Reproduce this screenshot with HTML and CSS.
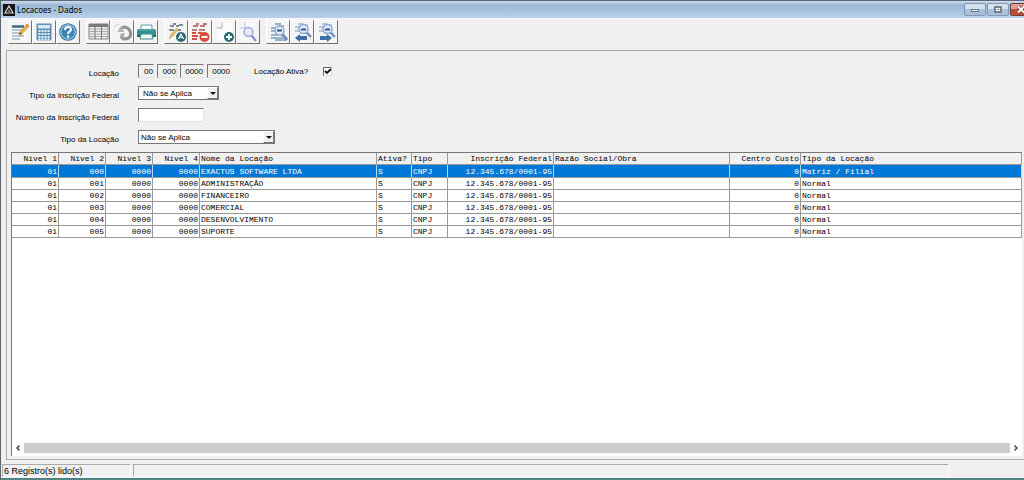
FILE: index.html
```html
<!DOCTYPE html>
<html lang="pt-BR">
<head>
<meta charset="utf-8">
<title>Locacoes - Dados</title>
<link rel="stylesheet" href="styles.css">
</head>
<body>
<div class="window">
  <header class="titlebar">
    <svg class="app-icon" viewBox="0 0 12 12" aria-hidden="true"><rect width="12" height="12" fill="#151515"/><path d="M6 2 10 9H2Z" fill="none" stroke="#d9d9cf" stroke-width="1.2"/><path d="M6 4.500 7.500 8h-3Z" fill="#777"/></svg>
    <h1 class="title">Locacoes - Dados</h1>
    <div class="window-buttons">
      <button class="win-btn" aria-label="Minimizar"><svg viewBox="0 0 20 11"><rect x="6.500" y="5.500" width="7" height="2" fill="#fff" stroke="#66717d"/></svg></button>
      <button class="win-btn" aria-label="Maximizar"><svg viewBox="0 0 20 11"><rect x="7" y="3" width="6" height="5" fill="#fff" stroke="#59636e" stroke-width="1.500"/><rect x="9" y="5" width="2" height="1" fill="#59636e"/></svg></button>
      <button class="win-btn win-close" aria-label="Fechar"><svg viewBox="0 0 20 11"><path d="m7 2.500 6 6m0-6-6 6" stroke="#7b3028" stroke-width="3.500"/><path d="m7 2.500 6 6m0-6-6 6" stroke="#fff" stroke-width="2"/></svg></button>
    </div>
  </header>

  <nav class="toolbar" aria-label="Ferramentas">
    <div class="tool-group">
      <button class="tool" aria-label="Editar"><svg viewBox="0 0 22 22"><path d="M3 4h14v14H3z" fill="#f9f9f5"/><path d="M3 5.500h12" stroke="#3e668a" stroke-width="2.500"/><path d="M3 9h10M3 12h8M3 15h12M3 18h8" stroke="#7890a5"/><path d="m10 14 1-3 7-8 2 2-7 8Z" fill="#edb33d" stroke="#b88b38" stroke-width=".6"/><path d="m10 14 1-3 2 2Z" fill="#705b42"/><path d="m17 4 1-1 2 2-1 1Z" fill="#c87855"/></svg></button>
      <button class="tool" aria-label="Calculadora"><svg viewBox="0 0 22 22"><rect x="3.500" y="2.500" width="15" height="17" rx="1" fill="#5b8fb6"/><rect x="5" y="4" width="12" height="3.500" fill="#d9e8f0"/><path d="M5.500 10h11M5.500 13h11M5.500 16h11M5.500 18.500h11" stroke="#e8f2f8" stroke-width="1.800" stroke-dasharray="2 1"/></svg></button>
      <button class="tool" aria-label="Ajuda"><svg viewBox="0 0 22 22"><circle cx="11" cy="11" r="8.800" fill="#2d70a3"/><circle cx="11" cy="11" r="7.200" fill="#3c85b8" stroke="#c4deec"/><path d="M8 9c0-4 6-4 6-.500 0 2.200-3 2-3 4.500" fill="none" stroke="#fff" stroke-width="2"/><circle cx="11" cy="15.500" r="1.200" fill="#fff"/></svg></button>
    </div>
    <div class="tool-group">
      <button class="tool" aria-label="Grade"><svg viewBox="0 0 22 22"><path d="M2 3h19v15H2z" fill="#eee" stroke="#858585"/><path d="M2 4.500h19" stroke="#777c80" stroke-width="3"/><path d="M2 8h19M2 10.500h19M2 13h19M2 15.500h19" stroke="#aaa"/><path d="M8 3v15M14.500 3v15" stroke="#777"/></svg></button>
      <button class="tool" aria-label="Atualizar"><svg viewBox="0 0 22 22"><path d="m9 9 2-2c3-2 7 0 8 3 2 5-1 8-5 8-2 0-3-1-4-3" fill="none" stroke="#949494" stroke-width="3.200"/><path d="m6 11 5-5 2 5Z" fill="#b4b4b4"/><path d="m9 13 5-1-3 6Z" fill="#aaa"/><path d="m3 6 2-1 1-2 2 1" fill="none" stroke="#d2d2d2"/></svg></button>
      <button class="tool" aria-label="Imprimir"><svg viewBox="0 0 22 22"><path d="M6 4h11v5H6z" fill="#f4faf9" stroke="#5ba3a1"/><path d="M3 8h17l1 2v5H2v-5Z" fill="#34908f"/><path d="M4 9h15" stroke="#76b7b3"/><path d="M6 13h11l1 5H5Z" fill="#eaf5f4" stroke="#3b8e8b"/><path d="M2 15h3m13 0h3" stroke="#266c69" stroke-width="2"/></svg></button>
    </div>
    <div class="tool-group">
      <button class="tool" aria-label="Alterar"><svg viewBox="0 0 22 22"><path d="M5 5h4m2 0h3M8 3h3m3 1h4M4 9h5m2 0h5" stroke="#54686b" stroke-width="1.500"/><path d="m4 18 2-5 6-6 1.500 1.500-6 7Z" fill="#e5bd60" stroke="#b6a16c" stroke-width=".5"/><circle cx="16" cy="16" r="5" fill="#286b75"/><path d="m13.500 18 2.500-5 2.500 5m-4-1.500h3" fill="none" stroke="#fff" stroke-width="1.200"/></svg></button>
      <button class="tool" aria-label="Excluir"><svg viewBox="0 0 22 22"><path d="M4 5h5m2 0h5M7 3h3m4 0h4M3 9h5m2 0h6" stroke="#aa514b" stroke-width="1.500"/><path d="M3 12h4m2 0h4M3 15h6M3 18h5" stroke="#d34d42" stroke-width="2"/><circle cx="15.500" cy="16" r="5" fill="#dd4b3f"/><path d="M12.500 16h6" stroke="#fff" stroke-width="2"/></svg></button>
      <button class="tool" aria-label="Incluir"><svg viewBox="0 0 22 22"><path d="M9 2h10v17H4V7Z" fill="#fcfcfe"/><path d="M9 2v5H4" fill="none" stroke="#9babc1"/><circle cx="16" cy="16" r="5" fill="#286b75"/><path d="M13 16h6m-3-3v6" stroke="#fff" stroke-width="1.800"/></svg></button>
      <button class="tool" aria-label="Pesquisar"><svg viewBox="0 0 22 22"><path d="M8 2h10v17H3V7Z" fill="#fafafd"/><path d="M8 2v5H3" fill="none" stroke="#b0b6ce"/><path d="m14 14 5 6" stroke="#8e8fc8" stroke-width="2.500"/><circle cx="11.500" cy="11" r="4.500" fill="#e8eafb" stroke="#a1a6df" stroke-width="1.500"/></svg></button>
    </div>
    <div class="tool-group">
      <button class="tool" aria-label="Localizar"><svg viewBox="0 0 22 22"><path d="M8 3h6M4 7h5m3-2h5M4 10h4m-4 4h7m-7 3h12m-8 2h11" stroke="#7c9cb8" stroke-width="1.300"/><path d="m15 13 5 6" stroke="#7089be" stroke-width="3"/><circle cx="12.500" cy="9.500" r="4.500" fill="#e5edfb" stroke="#8da6d4" stroke-width="1.500"/><path d="M10 9.500h5" stroke="#364e85" stroke-width="2"/></svg></button>
      <button class="tool" aria-label="Localizar anterior"><svg viewBox="0 0 22 22"><path d="M7 3h6M4 6h5m3-2h5M4 10h4" stroke="#7c9cb8"/><path d="m15 11 5 5" stroke="#7798ce" stroke-width="2.500"/><circle cx="12.500" cy="8" r="4.500" fill="#e5edfb" stroke="#8da6d4" stroke-width="1.500"/><path d="M10 8.500h5" stroke="#364e85" stroke-width="2"/><path d="m4 17 5-4v2h7v4H9v2Z" fill="#416fa8"/></svg></button>
      <button class="tool" aria-label="Localizar próximo"><svg viewBox="0 0 22 22"><path d="M7 3h6M4 6h5m3-2h5M4 10h4" stroke="#7c9cb8"/><path d="m15 11 5 5" stroke="#7798ce" stroke-width="2.500"/><circle cx="12.500" cy="8" r="4.500" fill="#e5edfb" stroke="#8da6d4" stroke-width="1.500"/><path d="M10 8.500h5" stroke="#364e85" stroke-width="2"/><path d="m17 17-5-4v2H5v4h7v2Z" fill="#416fa8"/></svg></button>
    </div>
  </nav>

  <main class="panel">
    <form class="form">
      <label class="label" for="nivel1">Locação</label>
      <div class="controls">
        <input class="field code code-2" id="nivel1" value="00">
        <input class="field code code-3" aria-label="Nível 2" value="000">
        <input class="field code code-4" aria-label="Nível 3" value="0000">
        <input class="field code code-4" aria-label="Nível 4" value="0000">
        <label class="active-label" for="ativa">Locação Ativa?</label>
        <span class="check"><input class="check-box" type="checkbox" id="ativa" checked><svg class="check-mark" viewBox="0 0 9 9" aria-hidden="true"><path d="m2 4 2 2 4-4" fill="none" stroke="#111" stroke-width="1.800"/></svg></span>
      </div>
      <label class="label" for="tipo-inscricao">Tipo da Inscrição Federal</label>
      <div class="controls">
        <span class="combo combo-short"><select class="field select select-inset" id="tipo-inscricao"><option>Não se Aplica</option></select><span class="arrow"></span></span>
      </div>
      <label class="label" for="numero">Número da Inscrição Federal</label>
      <div class="controls"><input class="field number" id="numero"></div>
      <label class="label" for="tipo-locacao">Tipo da Locação</label>
      <div class="controls">
        <span class="combo combo-long"><select class="field select" id="tipo-locacao"><option>Não se Aplica</option></select><span class="arrow"></span></span>
      </div>
    </form>

    <section class="grid-box">
      <div class="grid-view">
        <table class="grid">
          <colgroup><col class="w-level"><col class="w-level"><col class="w-level"><col class="w-level"><col class="w-name"><col class="w-active"><col class="w-type"><col class="w-tax"><col class="w-company"><col class="w-cost"><col></colgroup>
          <thead><tr><th class="num">Nível 1</th><th class="num">Nível 2</th><th class="num">Nível 3</th><th class="num">Nível 4</th><th>Nome da Locação</th><th>Ativa?</th><th>Tipo</th><th class="num">Inscrição Federal</th><th>Razão Social/Obra</th><th class="num">Centro Custo</th><th>Tipo da Locação</th></tr></thead>
          <tbody>
            <tr class="selected"><td class="num">01</td><td class="num">000</td><td class="num">0000</td><td class="num">0000</td><td>EXACTUS SOFTWARE LTDA</td><td>S</td><td>CNPJ</td><td class="num">12.345.678/0001-95</td><td></td><td class="num">0</td><td>Matriz / Filial</td></tr>
            <tr><td class="num">01</td><td class="num">001</td><td class="num">0000</td><td class="num">0000</td><td>ADMINISTRAÇÃO</td><td>S</td><td>CNPJ</td><td class="num">12.345.678/0001-95</td><td></td><td class="num">0</td><td>Normal</td></tr>
            <tr><td class="num">01</td><td class="num">002</td><td class="num">0000</td><td class="num">0000</td><td>FINANCEIRO</td><td>S</td><td>CNPJ</td><td class="num">12.345.678/0001-95</td><td></td><td class="num">0</td><td>Normal</td></tr>
            <tr><td class="num">01</td><td class="num">003</td><td class="num">0000</td><td class="num">0000</td><td>COMERCIAL</td><td>S</td><td>CNPJ</td><td class="num">12.345.678/0001-95</td><td></td><td class="num">0</td><td>Normal</td></tr>
            <tr><td class="num">01</td><td class="num">004</td><td class="num">0000</td><td class="num">0000</td><td>DESENVOLVIMENTO</td><td>S</td><td>CNPJ</td><td class="num">12.345.678/0001-95</td><td></td><td class="num">0</td><td>Normal</td></tr>
            <tr><td class="num">01</td><td class="num">005</td><td class="num">0000</td><td class="num">0000</td><td>SUPORTE</td><td>S</td><td>CNPJ</td><td class="num">12.345.678/0001-95</td><td></td><td class="num">0</td><td>Normal</td></tr>
          </tbody>
        </table>
      </div>
      <div class="scrollbar">
        <button class="scroll-btn" aria-label="Rolar à esquerda"><svg viewBox="0 0 6 10"><path d="M4.500 2.500 2 5l2.500 2.500" fill="none" stroke="#444" stroke-width="1.500"/></svg></button>
        <div class="thumb"></div>
        <button class="scroll-btn" aria-label="Rolar à direita"><svg viewBox="0 0 6 10"><path d="M1.500 2.500 4 5 1.500 7.500" fill="none" stroke="#444" stroke-width="1.500"/></svg></button>
      </div>
    </section>
  </main>

  <footer class="status">
    <div class="status-cell status-count">6 Registro(s) lido(s)</div>
    <div class="status-cell status-message"></div>
  </footer>
</div>
</body>
</html>
```
FILE: styles.css
```css
* { box-sizing: border-box; }

body {
  margin: 0;
  font-family: "Liberation Sans", Arial, sans-serif;
  font-size: 8px;
  color: #000;
}

button, input, select { font: inherit; color: inherit; margin: 0; }
button svg { display: block; width: 100%; height: 100%; }

.window {
  display: flex;
  flex-direction: column;
  min-height: 100vh;
  overflow-x: hidden;
  background: #f0f0f0;
  border-left: 1px solid #596774;
  border-bottom: 2px solid #528486;
}

.titlebar {
  display: flex;
  align-items: center;
  height: 18px;
  padding-left: 2px;
  border-top: 1px solid #5c6674;
  background: linear-gradient(#d0dded, #9ab7d5 25%, #b9d0e9);
}
.app-icon { width: 12px; height: 12px; }
.title { flex: 1; margin: 0 0 0 2px; font: 8px/12px "Noto Sans", sans-serif; }
.window-buttons { display: flex; gap: 1px; overflow: hidden; margin-right: -8px; }
.win-btn {
  width: 22px;
  height: 13px;
  padding: 0;
  border: 1px solid #8499b0;
  border-radius: 2px;
  background: linear-gradient(#d4e1ef 50%, #a9c0d9 50%);
}
.win-close { border-color: #713c38; background: linear-gradient(#dda093 45%, #bd4c39 45%); }

.toolbar { display: flex; height: 32px; padding: 1px 7px 0; border-top: 1px solid #fafafa; }
.tool-group { display: flex; margin-right: 6px; }
.tool {
  width: 24px;
  height: 24px;
  padding: 0;
  background: #f4f4f4;
  border: 1px solid;
  border-color: #fff #77736c #77736c #fff;
}

.panel {
  flex: 1;
  display: flex;
  flex-direction: column;
  margin-left: 5px;
  padding: 13px 2px 3px 4px;
  border: solid #aaa;
  border-width: 1px 0 1px 1px;
}

.form {
  display: grid;
  grid-template-columns: 108px 1fr;
  column-gap: 19px;
  grid-auto-rows: 22px;
}
.label { text-align: right; white-space: nowrap; padding-top: 5px; line-height: 10px; justify-self: end; }
.controls { display: flex; align-items: flex-start; gap: 3px; }
.field {
  height: 14px;
  padding: 0 2px;
  background: #fff;
  border: 1px solid;
  border-color: #777 #e4e4e4 #e4e4e4 #777;
  border-radius: 0;
  outline: 0;
}
.code { background: #f0f0f0; text-align: right; padding: 0; }
.code-2 { width: 16px; }
.code-3 { width: 20px; }
.code-4 { width: 24px; }
.number { width: 66px; }
.active-label { width: 63px; margin-left: 20px; line-height: 16px; white-space: nowrap; }
.check { position: relative; width: 9px; height: 9px; margin: 3px 0 0 3px; }
.check-box {
  display: block;
  appearance: none;
  width: 9px;
  height: 9px;
  background: #fff;
  border: 1px solid;
  border-color: #666 #ddd #ddd #666;
}
.check-mark { position: absolute; inset: 0; pointer-events: none; }

.combo { position: relative; display: block; }
.combo-short { width: 81px; }
.combo-long { width: 137px; }
.select { display: block; width: 100%; appearance: none; border-color: #777; }
.select-inset { padding-left: 4px; }
.arrow {
  position: absolute;
  top: 1px;
  right: 1px;
  bottom: 1px;
  display: grid;
  place-items: center;
  width: 11px;
  background: #f0f0f0;
  border: 1px solid;
  border-color: #fff #777 #777 #fff;
  pointer-events: none;
}
.arrow::before {
  content: "";
  border: 3px solid transparent;
  border-top-color: #111;
  border-bottom: 0;
}

.grid-box {
  flex: 1;
  display: flex;
  flex-direction: column;
  background: #fff;
  border: solid #777;
  border-width: 1px 0 0 1px;
}
.grid-view { flex: 1; overflow: hidden; }
.grid {
  width: 100%;
  table-layout: fixed;
  border-collapse: separate;
  border-spacing: 0;
  font: 8px/11px "Liberation Mono", "Courier New", monospace;
  color: #000;
}
.grid th, .grid td {
  height: 12px;
  padding: 0 1px;
  border-right: 1px solid #999;
  border-bottom: 1px solid #999;
  text-align: left;
  font-weight: normal;
  white-space: nowrap;
}
.grid th { background: #f0f0f0; }
.grid .num { text-align: right; }
.grid .selected td { height: 13px; background: #0078d7; border-right-color: #b7d8f2; color: #fff; }
.w-level { width: 47px; }
.w-name { width: 177px; }
.w-active { width: 35px; }
.w-type { width: 36px; }
.w-tax { width: 106px; }
.w-company { width: 176px; }
.w-cost { width: 71px; }

.scrollbar { display: flex; height: 14px; padding: 1px 3px 3px; }
.scroll-btn { width: 6px; height: 10px; padding: 0; border: 0; background: none; }
.thumb { flex: 1; margin: 0 3px; background: #cdcdcd; }

.status { display: flex; gap: 2px; height: 18px; padding: 4px 75px 1px 1px; font-size: 9px; }
.status-cell { border: 1px solid; border-color: #aaa #fff #fff #aaa; line-height: 12px; }
.status-count { width: 129px; padding-left: 1px; white-space: nowrap; }
.status-message { flex: 1; }
```
